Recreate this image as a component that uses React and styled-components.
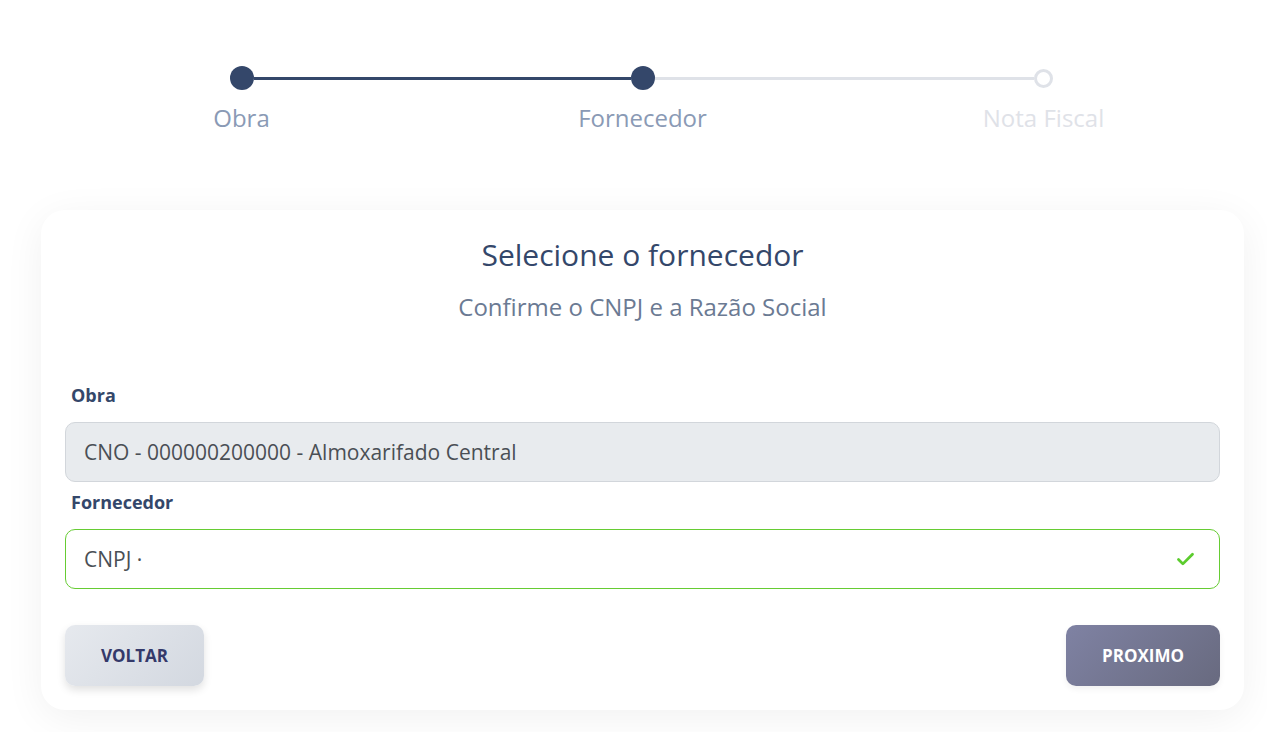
import React from 'react'
import styled, { createGlobalStyle } from 'styled-components'
import { Check } from 'lucide-react'

const GlobalStyle = createGlobalStyle`
  * { box-sizing: border-box; }
  body {
    margin: 0;
    background: #ffffff;
    font-family: "Open Sans", "Noto Sans", sans-serif;
  }
`

const steps = [
  { label: 'Obra', state: 'done' },
  { label: 'Fornecedor', state: 'current' },
  { label: 'Nota Fiscal', state: 'todo' },
]

function App() {
  return (
    <>
      <GlobalStyle />
      <Page>
        <Stepper>
          {steps.map((s, i) => (
            <Step key={s.label}>
              <Track>
                <Segment $hidden={i === 0} $active={s.state !== 'todo'} />
                <Dot $state={s.state} />
                <Segment $hidden={i === steps.length - 1} $active={s.state === 'done'} />
              </Track>
              <StepLabel $muted={s.state === 'todo'}>{s.label}</StepLabel>
            </Step>
          ))}
        </Stepper>

        <Card>
          <Title>Selecione o fornecedor</Title>
          <Subtitle>Confirme o CNPJ e a Razão Social</Subtitle>

          <Fields>
            <Field>
              <Label>Obra</Label>
              <Input $disabled>CNO - 000000200000 - Almoxarifado Central</Input>
            </Field>
            <Field>
              <Label>Fornecedor</Label>
              <Input $valid>
                CNPJ ·
                <Check size={21} strokeWidth={3.2} color="#5ccc2e" />
              </Input>
            </Field>
          </Fields>

          <Actions>
            <BackButton>VOLTAR</BackButton>
            <NextButton>PROXIMO</NextButton>
          </Actions>
        </Card>
      </Page>
    </>
  )
}

export default App

const Page = styled.div`
  padding: 66px 23px 22px 41px;
`

const Stepper = styled.div`
  display: grid;
  grid-template-columns: repeat(3, 1fr);
  width: 1203px;
`

const Step = styled.div`
  display: flex;
  flex-direction: column;
  align-items: center;
`

const Track = styled.div`
  display: flex;
  align-items: center;
  width: 100%;
  height: 24px;
`

const Segment = styled.div`
  flex: 1;
  height: 3px;
  background: ${p => (p.$hidden ? 'transparent' : p.$active ? '#34476a' : '#dfe2e8')};
`

const Dot = styled.div`
  flex: none;
  border-radius: 50%;
  ${p =>
    p.$state === 'todo'
      ? `width: 19px; height: 19px; border: 3px solid #dfe2e8; background: #fff;`
      : `width: 24px; height: 24px; background: #34476a;`}
`

const StepLabel = styled.div`
  margin-top: 12px;
  font-size: 24px;
  line-height: 32px;
  color: ${p => (p.$muted ? '#dfe2e8' : '#8a9ab5')};
`

const Card = styled.div`
  margin-top: 76px;
  width: 1203px;
  background: #fff;
  border-radius: 24px;
  box-shadow: 0 8px 40px rgba(0, 0, 0, 0.06);
  padding: 24px 24px 24px;
`

const Title = styled.h1`
  margin: 0;
  text-align: center;
  font-size: 30px;
  line-height: 42px;
  font-weight: 400;
  color: #34476a;
`

const Subtitle = styled.p`
  margin: 15px 0 0;
  text-align: center;
  font-size: 24px;
  line-height: 32px;
  color: #6b7a93;
`

const Fields = styled.div`
  margin-top: 60px;
  display: flex;
  flex-direction: column;
  gap: 8px;
`

const Field = styled.div`
  display: flex;
  flex-direction: column;
`

const Label = styled.label`
  padding-left: 6px;
  font-size: 18px;
  line-height: 24px;
  font-weight: 700;
  color: #34476a;
  margin-bottom: 15px;
`

const Input = styled.div`
  height: 60px;
  display: flex;
  align-items: center;
  justify-content: space-between;
  padding: 0 23px 0 18px;
  font-size: 21px;
  color: #4a4f55;
  border-radius: 10px;
  border: 1px solid ${p => (p.$valid ? '#66cc33' : '#d2d6db')};
  background: ${p => (p.$disabled ? '#e8ebee' : '#fff')};
`

const Actions = styled.div`
  margin-top: 36px;
  display: flex;
  justify-content: space-between;
`

const BackButton = styled.button`
  height: 61px;
  width: 139px;
  border: none;
  border-radius: 10px;
  font-family: inherit;
  font-size: 17px;
  font-weight: 700;
  color: #34396a;
  background: linear-gradient(135deg, #e6e9ee, #d3d8e0);
  box-shadow: 0 4px 8px rgba(0, 0, 0, 0.12);
  cursor: pointer;
`

const NextButton = styled(BackButton)`
  width: 154px;
  color: #fff;
  background: linear-gradient(135deg, #7f82a3, #686a7f);
  box-shadow: 0 3px 6px rgba(0, 0, 0, 0.06);
`
